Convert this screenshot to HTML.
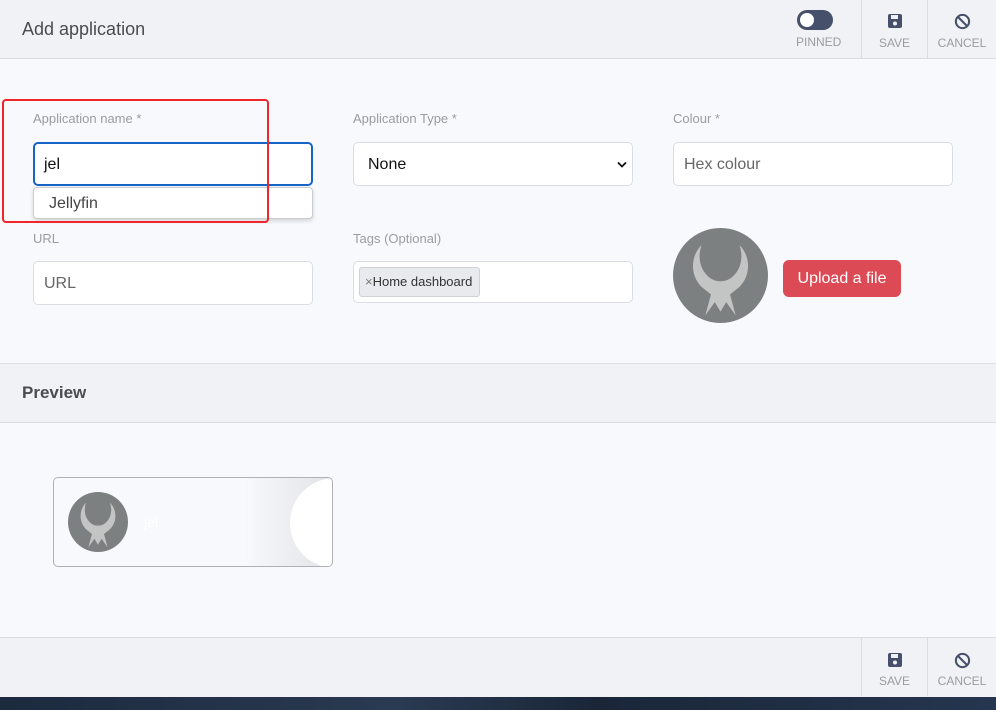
<!DOCTYPE html><html><head><style>
*{box-sizing:border-box;margin:0;padding:0}
body{width:996px;height:710px;overflow:hidden;background:#f8f9fc;font-family:"Liberation Sans",sans-serif;position:relative}
.abs{position:absolute}
.hdr{left:0;top:0;width:996px;height:59px;background:#f1f2f6;border-bottom:1px solid #dcdde2}
.btn{top:0;height:58px;border-left:1px solid #dcdde2;text-align:center;font-size:12px;color:#9a9ca3}
.lbl{font-size:13px;color:#9a9ca3}
.inp{background:#fff;border:1px solid #dcdde2;border-radius:5px;height:44px;font-size:16px;color:#666;padding:0 10px;line-height:44px}
</style></head><body>
<svg width="0" height="0" style="position:absolute"><defs><g id="logo"><circle cx="50" cy="50" r="50" fill="#7d8081"/><path d="M30 18 C18 30 18 50 30 62 L40 70 L34 92 L44 78 L50 88 L56 78 L66 92 L60 70 L70 62 C82 50 82 30 70 18 C74 30 72 42 64 50 C60 54 56 56 50 56 C44 56 40 54 36 50 C28 42 26 30 30 18 Z" fill="#c3c5c4"/><circle cx="50" cy="36" r="13" fill="#7d8081"/></g></defs></svg>
<div class="abs hdr"></div>
<div class="abs" style="left:22px;top:19px;font-size:18px;color:#4a4c52">Add application</div>
<div class="abs" style="left:797px;top:10px;width:36px;height:20px;border-radius:10px;background:#46506a"><div style="position:absolute;left:3px;top:3px;width:14px;height:14px;border-radius:50%;background:#fff"></div></div>
<div class="abs" style="left:796px;top:35px;font-size:12px;color:#9a9ca3">PINNED</div>
<div class="abs btn" style="left:861px;width:66px"><svg style="margin-top:13px" width="16" height="16" viewBox="0 0 16 16"><rect x="1" y="1" width="14" height="14" rx="2" fill="#46506a"/><rect x="4" y="2" width="7" height="4" fill="#f1f2f6"/><circle cx="8" cy="10.5" r="2" fill="#f1f2f6"/></svg><div style="margin-top:4px">SAVE</div></div>
<div class="abs btn" style="left:927px;width:69px"><svg style="margin-top:13px" width="17" height="17" viewBox="0 0 18 18"><circle cx="9" cy="9" r="7" fill="none" stroke="#46506a" stroke-width="2.2"/><line x1="4" y1="4" x2="14" y2="14" stroke="#46506a" stroke-width="2.2"/></svg><div style="margin-top:3px">CANCEL</div></div>

<div class="abs lbl" style="left:33px;top:111px">Application name *</div>
<div class="abs inp" style="left:33px;top:142px;width:280px;border:2px solid #1764c7;color:#111;padding-left:9px;line-height:42px">jel</div>
<div class="abs" style="left:33px;top:187px;width:280px;height:32px;background:#fff;border:1px solid #ccc;border-radius:4px;box-shadow:0 2px 4px rgba(0,0,0,.15);font-size:16px;color:#444;padding:7px 15px">Jellyfin</div>
<div class="abs" style="left:2px;top:99px;width:267px;height:124px;border:2px solid #f0262b;border-radius:4px"></div>

<div class="abs lbl" style="left:353px;top:111px">Application Type *</div>
<div class="abs inp" style="left:353px;top:142px;width:280px;color:#111;padding-left:14px">None<svg style="position:absolute;right:5px;top:18px" width="10" height="8" viewBox="0 0 10 8"><path d="M1 1.5 L5 5.5 L9 1.5" fill="none" stroke="#111" stroke-width="1.8"/></svg></div>
<div class="abs lbl" style="left:673px;top:111px">Colour *</div>
<div class="abs inp" style="left:673px;top:142px;width:280px">Hex colour</div>

<div class="abs lbl" style="left:33px;top:231px">URL</div>
<div class="abs inp" style="left:33px;top:261px;width:280px">URL</div>
<div class="abs lbl" style="left:353px;top:231px">Tags (Optional)</div>
<div class="abs inp" style="left:353px;top:261px;width:280px;height:42px"></div>
<div class="abs" style="left:359px;top:267px;width:121px;height:30px;background:#e9eaed;border:1px solid #d0d1d5;border-radius:3px;font-size:13px;color:#333;line-height:28px;padding-left:5px"><span style="color:#777">×</span>Home dashboard</div>

<svg class="abs" style="left:673px;top:228px" width="95" height="95" viewBox="0 0 100 100"><use href="#logo"/></svg>
<div class="abs" style="left:783px;top:260px;width:118px;height:37px;background:#dc4b55;border-radius:6px;color:#fff;font-size:16px;text-align:center;line-height:37px">Upload a file</div>

<div class="abs" style="left:0;top:363px;width:996px;height:60px;background:#f1f2f6;border-top:1px solid #dcdde2;border-bottom:1px solid #dcdde2"></div>
<div class="abs" style="left:22px;top:383px;font-size:17px;font-weight:bold;color:#4a4c52">Preview</div>

<div class="abs" style="left:53px;top:477px;width:280px;height:90px;border:1px solid #b0b1b5;border-radius:5px;overflow:hidden;background:#f8f9fc">
<svg style="position:absolute;left:14px;top:14px" width="60" height="60" viewBox="0 0 100 100"><use href="#logo"/></svg>
<div style="position:absolute;left:90px;top:36px;color:#fff;font-size:14px">jel</div>
<div style="position:absolute;left:190px;top:0;width:90px;height:90px;background:linear-gradient(90deg,rgba(0,0,0,0),rgba(0,0,0,.09))"></div>
<div style="position:absolute;left:236px;top:0;width:90px;height:90px;border-radius:50%;background:#fff"></div>
<div style="position:absolute;left:248px;top:33px;color:#fff;font-size:18px">➜</div>
</div>

<div class="abs" style="left:0;top:637px;width:996px;height:60px;background:#f1f2f6;border-top:1px solid #dcdde2"></div>
<div class="abs btn" style="left:861px;top:638px;width:66px"><svg style="margin-top:14px" width="16" height="16" viewBox="0 0 16 16"><rect x="1" y="1" width="14" height="14" rx="2" fill="#46506a"/><rect x="4" y="2" width="7" height="4" fill="#f1f2f6"/><circle cx="8" cy="10.5" r="2" fill="#f1f2f6"/></svg><div style="margin-top:3px">SAVE</div></div>
<div class="abs btn" style="left:927px;top:638px;width:69px"><svg style="margin-top:14px" width="17" height="17" viewBox="0 0 18 18"><circle cx="9" cy="9" r="7" fill="none" stroke="#46506a" stroke-width="2.2"/><line x1="4" y1="4" x2="14" y2="14" stroke="#46506a" stroke-width="2.2"/></svg><div style="margin-top:2px">CANCEL</div></div>
<div class="abs" style="left:0;top:697px;width:996px;height:13px;background:linear-gradient(90deg,#1c2a3e,#2a3a52 40%,#1a2638 60%,#263650)"></div>
</body></html>
